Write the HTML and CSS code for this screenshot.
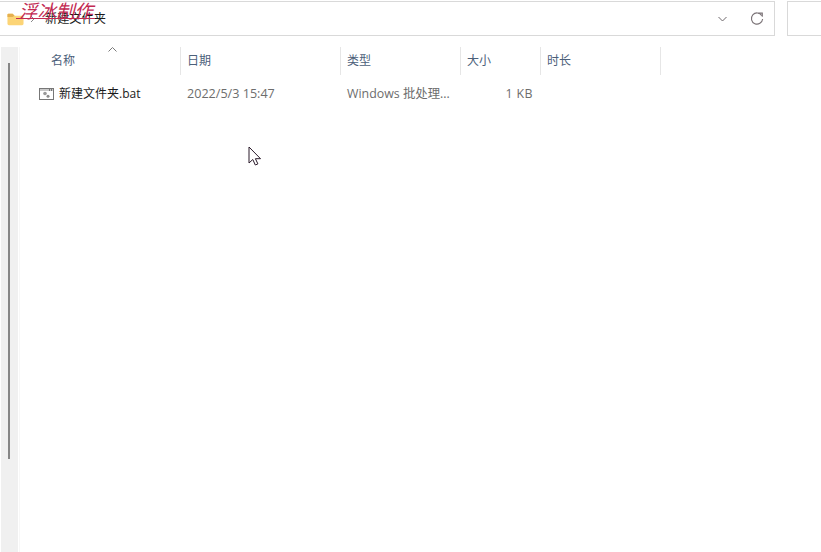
FILE: index.html
```html
<!DOCTYPE html>
<html lang="zh-CN">
<head>
<meta charset="utf-8">
<title>新建文件夹</title>
<link rel="stylesheet" href="styles.css">
</head>
<body>
<div class="toolbar">
  <div class="address">
    <svg class="folder" width="17" height="14" viewBox="0 0 18 14">
      <path d="M0.500 2.500a1 1 0 0 1 1-1h4.500l2 2h8a1.500 1.500 0 0 1 1.500 1.500v7a1.500 1.500 0 0 1-1.500 1.500h-14a1.500 1.500 0 0 1-1.500-1.500z" fill="#fcd476"/>
      <path d="M0.500 2.500a1 1 0 0 1 1-1h4.500l2 2-2 1.500h-5.500z" fill="#e5b04f"/>
    </svg>
    <svg class="crumb" width="5" height="8" viewBox="0 0 5 8"><path d="M1 1l3 3-3 3" fill="none" stroke="#8a8a8a"/></svg>
    <span class="path">新建文件夹</span>
    <svg class="chevron" width="9" height="6" viewBox="0 0 9 6"><path d="M0.500 1l4 4 4-4" fill="none" stroke="#6f686c"/></svg>
    <svg class="refresh" width="14" height="14" viewBox="0 0 14 14"><path d="M11.800 3.600A5.600 5.600 0 1 0 12.600 7" fill="none" stroke="#7b7377" stroke-width="1.100"/><path d="M8.300 1.100h4v3.600" fill="none" stroke="#7b7377" stroke-width="1.100"/></svg>
  </div>
  <div class="search"></div>
</div>
<div class="main">
  <div class="track"><div class="thumb"></div></div>
  <div class="list">
    <div class="header">
      <div class="col col-name">名称
        <svg class="sort" width="9" height="5" viewBox="0 0 9 5"><path d="M0.500 4.500l4-4 4 4" fill="none" stroke="#7a7a7a"/></svg>
      </div>
      <div class="col col-date">日期</div>
      <div class="col col-type">类型</div>
      <div class="col col-size">大小</div>
      <div class="col col-len">时长</div>
    </div>
    <div class="row">
      <div class="cell-name">
        <svg class="bat" width="15" height="12" viewBox="0 0 15 12">
          <rect x="0.500" y="0.500" width="14" height="11" fill="#fff" stroke="#777"/>
          <rect x="1" y="1" width="13" height="2" fill="#c9c9c9"/>
          <rect x="10" y="1" width="1" height="2" fill="#777"/>
          <rect x="12" y="1" width="1" height="2" fill="#777"/>
          <circle cx="6" cy="5.500" r="1.800" fill="#9a9a9a"/>
          <circle cx="9" cy="8.200" r="1.500" fill="#8a8a8a"/>
        </svg>
        <span>新建文件夹.bat</span>
      </div>
      <div class="cell cell-date">2022/5/3 15:47</div>
      <div class="cell cell-type">Windows 批处理...</div>
      <div class="cell cell-size">1 KB</div>
    </div>
  </div>
</div>
<div class="watermark">浮冰制作</div>
<div class="watermark-line"></div>
<svg class="cursor" width="14" height="20" viewBox="0 0 14 20">
  <path d="M1 1v16l3.800-3.500 2.500 5.500 2.600-1.100-2.500-5.200h5.100z" fill="#fff" stroke="#2a1a2a" stroke-width="1"/>
</svg>
</body>
</html>
```
FILE: styles.css
```css
* { box-sizing: border-box; }
html, body { margin: 0; height: 100%; overflow: hidden; background: #fff; }
body {
  font-family: "Open Sans", "Noto Sans CJK SC", sans-serif;
  font-size: 12px;
  position: relative;
  width: 821px;
  height: 552px;
}
.toolbar {
  display: flex;
  gap: 12px;
  height: 36px;
  padding-top: 1px;
  margin-left: -1px;
  width: 840px;
}
.address {
  width: 776px;
  height: 35px;
  border: 1px solid #d9d9d9;
  display: flex;
  align-items: center;
  padding-left: 7px;
}
.search {
  flex: 1;
  height: 35px;
  border: 1px solid #d9d9d9;
}
.crumb { margin-left: 6px; margin-top: 1px; }
.path { margin-left: 10px; color: #1a1a1a; font-size: 12.2px; line-height: 16px; margin-top: 1px; }
.chevron { margin-left: auto; margin-top: 1px; }
.refresh { margin-left: 23px; margin-right: 10px; margin-top: 1px; }
.main {
  display: flex;
  height: 516px;
  padding-top: 11px;
}
.track {
  width: 17px;
  margin-left: 1px;
  background: #f0f0f0;
  padding-top: 16px;
  flex: none;
}
.thumb {
  width: 2px;
  height: 396px;
  margin-left: 7px;
  background: #868686;
}
.list {
  flex: 1;
  margin-left: 1px;
  border-left: 1px solid #f7f7f7;
}
.header {
  display: grid;
  grid-template-columns: 161px 160px 120px 80px 120px;
  height: 27px;
}
.col {
  position: relative;
  padding-left: 31px;
  border-right: 1px solid #e6e6e6;
  color: #4c607a;
  font-size: 12px;
  line-height: 28px;
}
.col-date, .col-type, .col-size, .col-len { padding-left: 6px; }
.sort { position: absolute; left: 88px; top: 0; }
.row {
  display: flex;
  margin-top: 12px;
  height: 16px;
  line-height: 16px;
  color: #6d6d6d;
  font-size: 12.4px;
  align-items: center;
}
.cell-name {
  width: 161px;
  padding-left: 19px;
  display: flex;
  align-items: center;
  gap: 5px;
  color: #1a1a1a;
  font-size: 12px;
}
.bat { flex: none; margin-top: -1px; }
.cell-date { width: 160px; padding-left: 6px; font-size: 12.6px; }
.cell-type { width: 120px; padding-left: 6px; }
.cell-size { width: 72px; text-align: right; letter-spacing: 0.4px; }
.watermark {
  position: absolute;
  left: 19px;
  top: -3px;
  font-family: "Noto Sans CJK SC", sans-serif;
  font-style: italic;
  font-size: 18.5px;
  line-height: 26px;
  color: #c22a52;
  font-weight: 400;
}
.watermark-line {
  position: absolute;
  left: 16px;
  top: 18px;
  width: 79px;
  height: 1px;
  background: #c22a52;
}
.cursor { position: absolute; left: 248px; top: 146px; }
```
